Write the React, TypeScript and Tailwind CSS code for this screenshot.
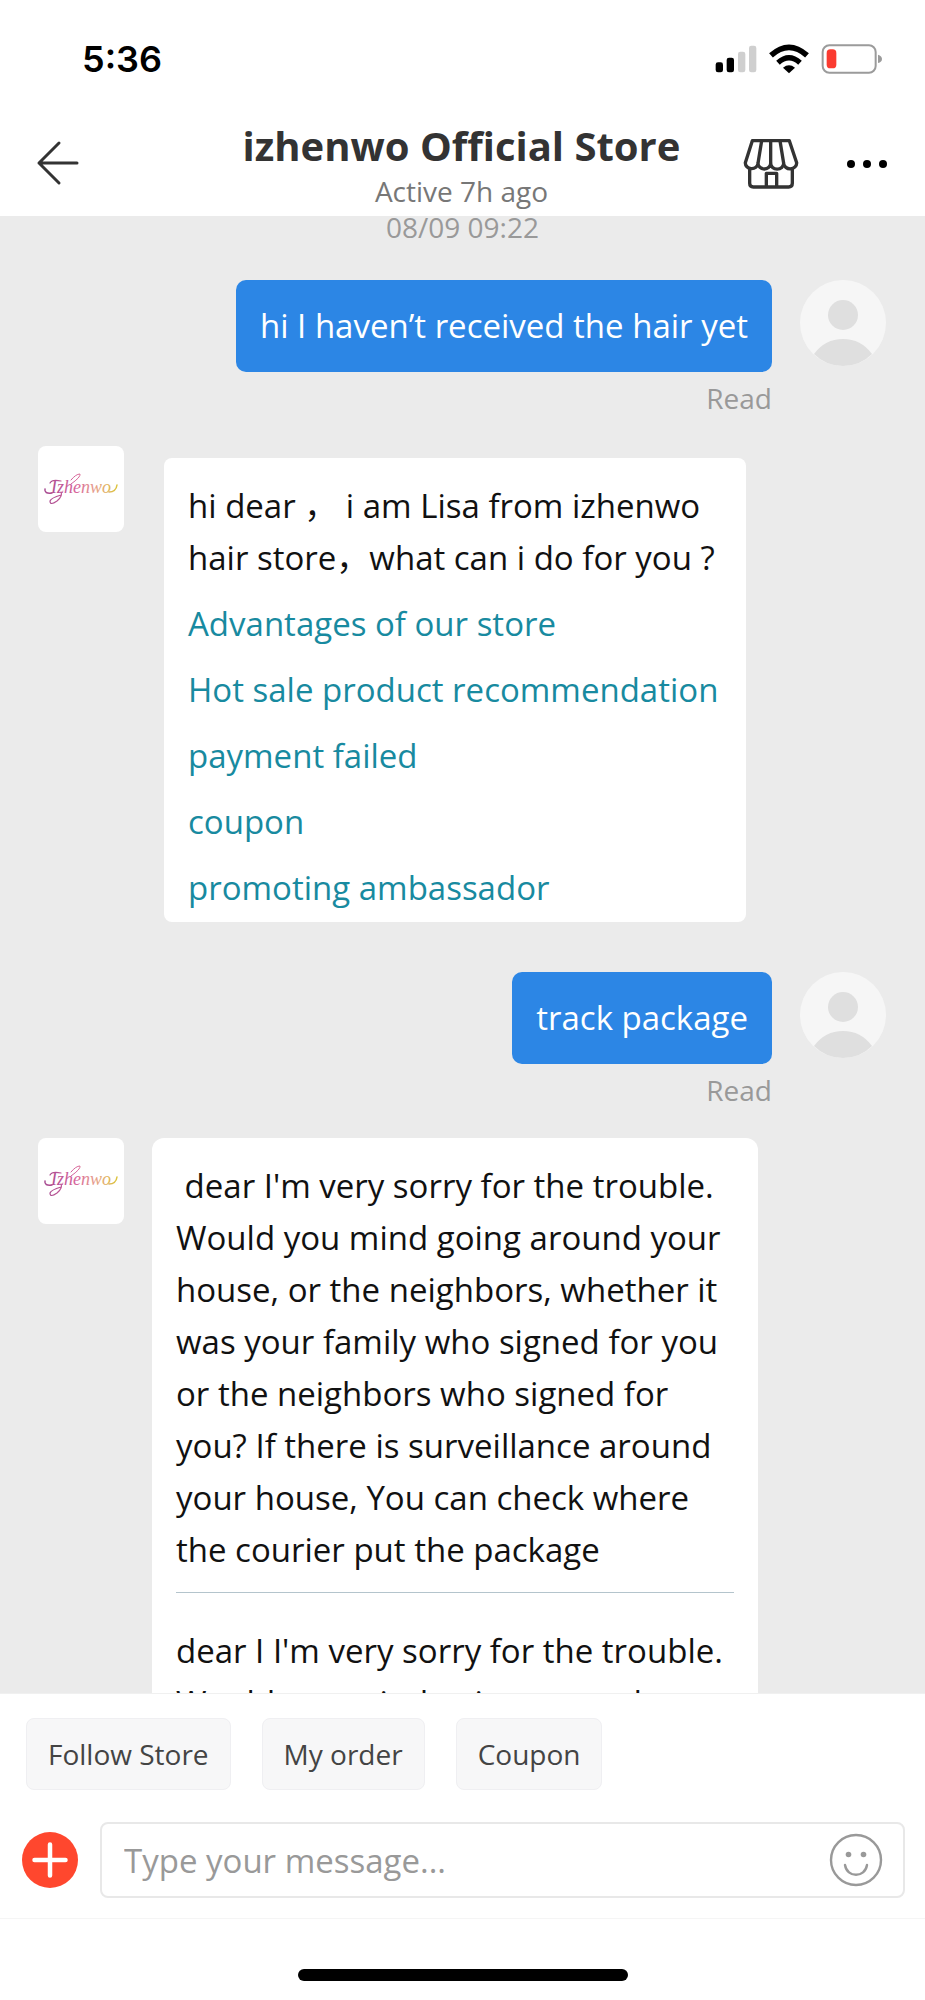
import { useState } from 'react';

const links = [
    "Advantages of our store",
    "Hot sale product recommendation",
    "payment failed",
    "coupon",
    "promoting ambassador"
];

const quickActions = ["Follow Store", "My order", "Coupon"];

const StatusBar = () => (
    <div className="flex h-[118px] items-center justify-between pr-[42px] pl-[82px]">
        <span className="font-['Inter'] text-[36px] leading-[40px] font-semibold text-black">5:36</span>
        <div className="flex items-center gap-3">
            <svg width="42" height="28" viewBox="0 0 126 84">
                <rect x="2" y="52" width="22" height="30" rx="7" fill="#000" />
                <rect x="35" y="38" width="22" height="44" rx="7" fill="#000" />
                <rect x="69" y="20" width="22" height="62" rx="7" fill="#cfcfcf" />
                <rect x="102" y="2" width="22" height="80" rx="7" fill="#cfcfcf" />
            </svg>
            <svg width="40" height="30" viewBox="0 0 120 90" fill="none" stroke="#000">
                <path d="M6 34Q60 -14 114 34" strokeWidth="17" />
                <path d="M27 56Q60 26 93 56" strokeWidth="16" />
                <path d="M60 88L42 71Q60 57 78 71Z" fill="#000" stroke="none" />
            </svg>
            <svg width="62" height="30" viewBox="0 0 186 90">
                <rect x="5" y="4" width="159" height="82" rx="20" fill="none" stroke="#9b9b9b" strokeWidth="6" />
                <rect x="17" y="16" width="29" height="57" rx="11" fill="#fb3b30" />
                <path d="M171 32Q183 36 183 45T171 57Z" fill="#9b9b9b" />
            </svg>
        </div>
    </div>
);

const Header = () => (
    <header className="flex h-[98px] items-start justify-between pr-[34px] pl-8">
        <button type="button" aria-label="Back" className="mt-[22px] flex w-[148px]">
            <svg width="52" height="46" viewBox="0 0 52 46" fill="none" stroke="#333" strokeWidth="3" strokeLinecap="round" strokeLinejoin="round">
                <path d="M27 3L7 23L27 43M7 23H45" />
            </svg>
        </button>
        <div className="flex flex-col items-center">
            <h1 className="text-[40px] leading-[55px] font-bold whitespace-nowrap text-[#333]">izhenwo Official Store</h1>
            <p className="text-[28px] leading-[36px] text-[#777]">Active 7h ago</p>
        </div>
        <div className="mt-[20px] flex w-[148px] items-center justify-between">
            <button type="button" aria-label="Store">
                <svg width="56" height="52" viewBox="0 0 168 156" fill="none" stroke="#333" strokeWidth="10" strokeLinejoin="round">
                    <path d="M28 8H139L161 74A19 17 0 0 1 122 76A19 17 0 0 1 83 76A19 17 0 0 1 45 76A19 17 0 0 1 7 74Z" />
                    <path d="M56 8L45 76M83 8V76M111 8L122 76" />
                    <path d="M20 88V136Q20 147 31 147H137Q148 147 148 136V88" />
                    <path d="M70 147V106H101V147" />
                </svg>
            </button>
            <button type="button" aria-label="More">
                <svg width="48" height="20" viewBox="0 0 48 20" fill="#000">
                    <circle cx="8" cy="10" r="4" />
                    <circle cx="24" cy="10" r="4" />
                    <circle cx="40" cy="10" r="4" />
                </svg>
            </button>
        </div>
    </header>
);

const UserAvatar = () => (
    <svg className="shrink-0" width="86" height="86" viewBox="0 0 86 86">
        <circle cx="43" cy="43" r="43" fill="#f6f6f6" />
        <circle cx="43" cy="35" r="15" fill="#dfdfdf" />
        <path d="M14 74Q25 59 43 59T72 74Q60 86 43 86T14 74Z" fill="#dfdfdf" />
    </svg>
);

const StoreAvatar = ({ id }: { id: string }) => (
    <svg className="shrink-0 rounded-lg bg-white" width="86" height="86" viewBox="0 0 86 86">
        <defs>
            <linearGradient id={id} gradientUnits="userSpaceOnUse" x1="6" y1="0" x2="79" y2="0">
                <stop offset="0" stopColor="#a3478f" />
                <stop offset="0.45" stopColor="#d8669b" />
                <stop offset="0.7" stopColor="#e6a08c" />
                <stop offset="1" stopColor="#dcc43e" />
            </linearGradient>
        </defs>
        <text x="13" y="47" fontFamily="Liberation Serif, serif" fontStyle="italic" fontSize="18" fill={`url(#${id})`}>Izhenwo</text>
        <g fill="none" stroke={`url(#${id})`} strokeLinecap="round">
            <path d="M7 43Q6 48 14 47" strokeWidth="1.5" />
            <path d="M12 37Q14 33 23 35" strokeWidth="1.2" />
            <path d="M23 46Q25 50 19 55Q12 60 12 55Q13 52 23 49" strokeWidth="1.2" />
            <path d="M33 34Q38 28 42 28Q43 31 33 38" strokeWidth="1" />
            <path d="M71 46Q78 46 79 39" strokeWidth="1.5" />
        </g>
    </svg>
);

const SentMessage = ({ text }: { text: string }) => (
    <div className="flex items-start justify-end gap-7 pr-[39px]">
        <div className="flex flex-col items-end">
            <p className="rounded-[10px] bg-[#2c86e5] px-6 py-5 text-[33px] leading-[52px] text-white">{text}</p>
            <span className="mt-2 text-[28px] leading-[36px] text-[#999]">Read</span>
        </div>
        <UserAvatar />
    </div>
);

const App: React.FC = () => {
    const [message, setMessage] = useState('');

    return (
        <div className="flex h-screen flex-col bg-white font-['Open_Sans','Noto_Sans_CJK_SC',sans-serif]">
            <StatusBar />
            <Header />

            {/* Conversation */}
            <main className="min-h-0 flex-1 overflow-hidden bg-[#ebebeb]">
                <p className="text-center text-[28px] leading-[22px] text-[#999]">08/09 09:22</p>

                <div className="mt-[42px]">
                    <SentMessage text="hi I haven’t received the hair yet" />
                </div>

                <div className="mt-[30px] flex items-start gap-10 pl-[38px]">
                    <StoreAvatar id="logo-greeting" />
                    <div className="mt-3 w-[582px] rounded-lg bg-white px-6 pt-[22px] pb-2 text-[33px] leading-[52px] text-[#111]">
                        <p>hi dear ， i am Lisa from izhenwo hair store，what can i do for you ?</p>
                        <ul className="mt-[14px] flex flex-col gap-[14px]">
                            {links.map((link) => (
                                <li key={link}>
                                    <a href="#" className="block whitespace-nowrap text-[#188aa0]">{link}</a>
                                </li>
                            ))}
                        </ul>
                    </div>
                </div>

                <div className="mt-[50px]">
                    <SentMessage text="track package" />
                </div>

                <div className="mt-[30px] flex items-start gap-7 pl-[38px]">
                    <StoreAvatar id="logo-reply" />
                    <div className="w-[606px] rounded-xl bg-white px-6 pt-[22px] text-[33px] leading-[52px] text-[#111]">
                        <p className="whitespace-pre-wrap">{" dear I'm very sorry for the trouble. Would you mind going around your house, or the neighbors, whether it was your family who signed for you or the neighbors who signed for you? If there is surveillance around your house, You can check where the courier put the package"}</p>
                        <hr className="mt-4 mb-8 border-[#b4c4cc]" />
                        <p>dear I I'm very sorry for the trouble. Would you mind going around your</p>
                    </div>
                </div>
            </main>

            {/* Composer */}
            <footer className="shrink-0">
                <div className="flex gap-[31px] border-t border-[#f0f0f0] px-[26px] pt-6">
                    {quickActions.map((action) => (
                        <button key={action} type="button" className="rounded-lg border border-[#efeff2] bg-[#f7f7f8] px-[21px] py-4 text-[28px] leading-[38px] text-[#444]">
                            {action}
                        </button>
                    ))}
                </div>
                <div className="mt-8 flex items-center gap-[22px] border-b border-[#f5f5f5] pr-5 pb-5 pl-[22px]">
                    <button type="button" aria-label="Add attachment" className="shrink-0">
                        <svg width="56" height="56" viewBox="0 0 56 56">
                            <circle cx="28" cy="28" r="28" fill="#ff472e" />
                            <path d="M28 12.500V43.500M12.500 28H43.500" stroke="#fff" strokeWidth="4.500" strokeLinecap="round" />
                        </svg>
                    </button>
                    <div className="flex flex-1 items-center rounded-lg border-2 border-[#e8e8e8] pr-5 pl-[22px]">
                        <input
                            type="text"
                            aria-label="Type your message"
                            placeholder="Type your message..."
                            value={message}
                            onChange={(e) => setMessage(e.target.value)}
                            className="h-[72px] min-w-0 flex-1 text-[33px] text-[#333] outline-none placeholder:text-[#999]"
                        />
                        <button type="button" aria-label="Insert emoji">
                            <svg width="54" height="54" viewBox="0 0 54 54" fill="none" stroke="#999" strokeWidth="2.400">
                                <circle cx="27" cy="27" r="25" />
                                <path d="M16 32C18 45 36 45 38 32" strokeLinecap="round" />
                                <circle cx="19.500" cy="21.500" r="2.800" fill="#999" stroke="none" />
                                <circle cx="34.500" cy="21.500" r="2.800" fill="#999" stroke="none" />
                            </svg>
                        </button>
                    </div>
                </div>
                <div className="flex justify-center pt-[50px] pb-[19px]">
                    <div className="h-3 w-[330px] rounded-full bg-black" />
                </div>
            </footer>
        </div>
    );
};

export default App;
